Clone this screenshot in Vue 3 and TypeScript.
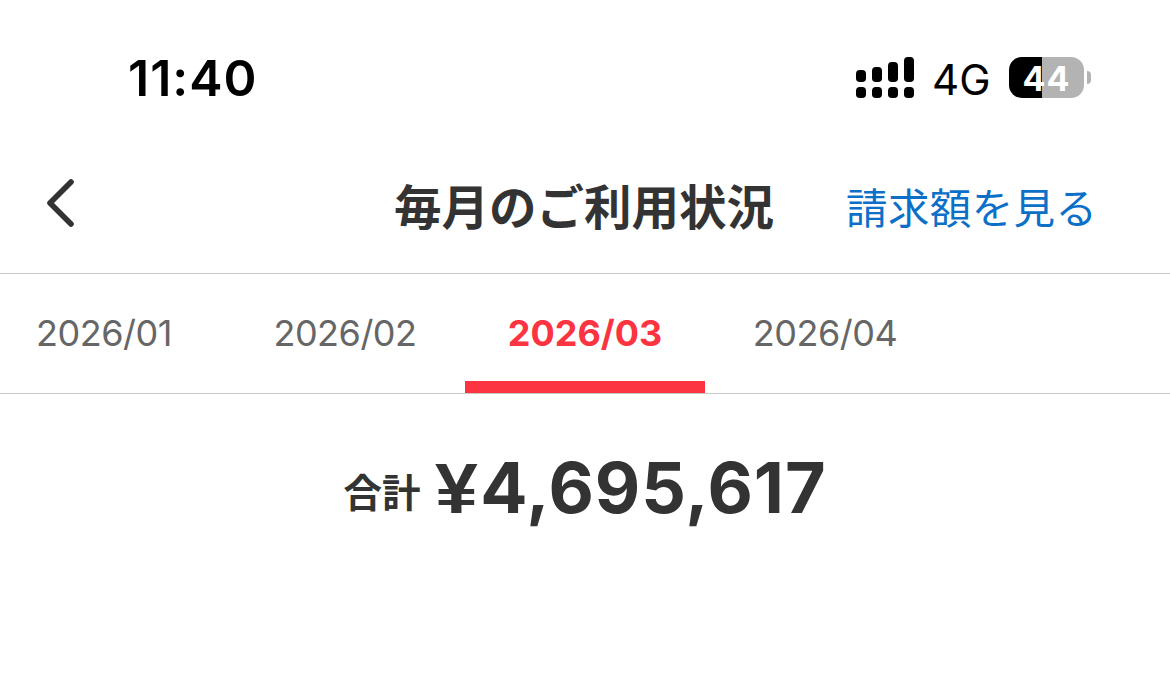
<script setup lang="ts">
interface Month { label: string; active?: boolean }
const months: Month[] = [
  { label: '2026/01' },
  { label: '2026/02' },
  { label: '2026/03', active: true },
  { label: '2026/04' },
]
</script>

<template>
  <main class="screen">
    <div class="status">
      <span class="clock">11:40</span>
      <svg class="signal" width="60" height="42" viewBox="0 0 60 42">
        <rect x="1" y="13" width="10" height="12" rx="3.8" />
        <rect x="17" y="10" width="10" height="15" rx="3.8" />
        <rect x="33" y="5" width="10" height="20" rx="3.8" />
        <rect x="49" y="0" width="10" height="25" rx="3.8" />
        <rect v-for="x in [1, 17, 33, 49]" :key="x" :x="x" y="30" width="10" height="11" rx="3.8" />
      </svg>
      <span class="network">4G</span>
      <div class="battery"><span>44</span></div>
      <i class="cap"></i>
    </div>
    <header class="nav">
      <svg class="back" width="32" height="52" viewBox="0 0 32 52"><path d="M27 5 6 26 27 47" /></svg>
      <h1>毎月のご利用状況</h1>
      <a class="bill">請求額を見る</a>
    </header>
    <nav class="tabs">
      <div v-for="m in months" :key="m.label" class="tab" :class="{ active: m.active }"><span>{{ m.label }}</span></div>
    </nav>
    <section class="total">
      <span class="label">合計</span><strong><span class="yen">¥</span>4,695,617</strong>
    </section>
  </main>
</template>

<style scoped>
.screen { width: 1170px; height: 688px; background: #fff; overflow: hidden; font-family: Inter, "Noto Sans CJK JP", sans-serif; color: #333; }
.status { height: 140px; box-sizing: border-box; padding-top: 57px; display: flex; align-items: flex-start; color: #000; }
.clock { box-sizing: border-box; flex: none; width: 855px; padding-left: 128px; font-size: 50px; font-weight: 600; letter-spacing: 1px; line-height: 43px; }
.signal { flex: none; }
.network { flex: none; width: 77px; margin-left: 17px; font-size: 42px; line-height: 46px; }
.battery { flex: none; width: 75px; height: 41px; border-radius: 13px; background: linear-gradient(90deg, #000 33px, #b3b3b3 33px); color: #fff; font-size: 34px; font-weight: 700; line-height: 43px; text-align: center; }
.battery span { letter-spacing: 1px; }
.cap { width: 4px; height: 13px; margin: 14px 0 0 3px; border-radius: 0 5px 5px 0; background: #b3b3b3; }
.nav { height: 134px; box-sizing: border-box; border-bottom: 1px solid #c8c8c8; display: flex; align-items: center; }
.back { margin: 0 0 7px 44px; width: 32px; flex: none; fill: none; stroke: #333; stroke-width: 5.6; stroke-linecap: round; stroke-linejoin: round; }
h1 { margin: 2px 0 0 318px; width: 452px; flex: none; font-size: 47.5px; line-height: 60px; font-weight: 700; white-space: nowrap; }
.bill { margin-top: 4px; color: #0c70c8; font-size: 41.5px; letter-spacing: 0.4px; line-height: 60px; white-space: nowrap; }
.tabs { height: 120px; box-sizing: border-box; border-bottom: 1px solid #c8c8c8; display: flex; padding-right: 15px; margin-left: -15px; }
.tab { box-sizing: border-box; width: 240px; flex: none; height: 119px; line-height: 119px; text-align: center; font-size: 36px; letter-spacing: -0.5px; color: #666; }
.tab.active { color: #fc3340; font-weight: 700; letter-spacing: 0; border-bottom: 12px solid #fc3340; }
.tab:first-child { padding-right: 2px; }
.total { height: 188px; display: flex; align-items: flex-start; justify-content: center; gap: 16px; }
.label { margin-top: 70px; font-size: 38.5px; line-height: 58px; font-weight: 600; }
strong { font-size: 70px; line-height: 187px; font-weight: 700; letter-spacing: 0.9px; }
.yen { display: inline-block; margin-right: 4px; font-family: "Liberation Sans", sans-serif; transform: scaleX(1.1); }
</style>
